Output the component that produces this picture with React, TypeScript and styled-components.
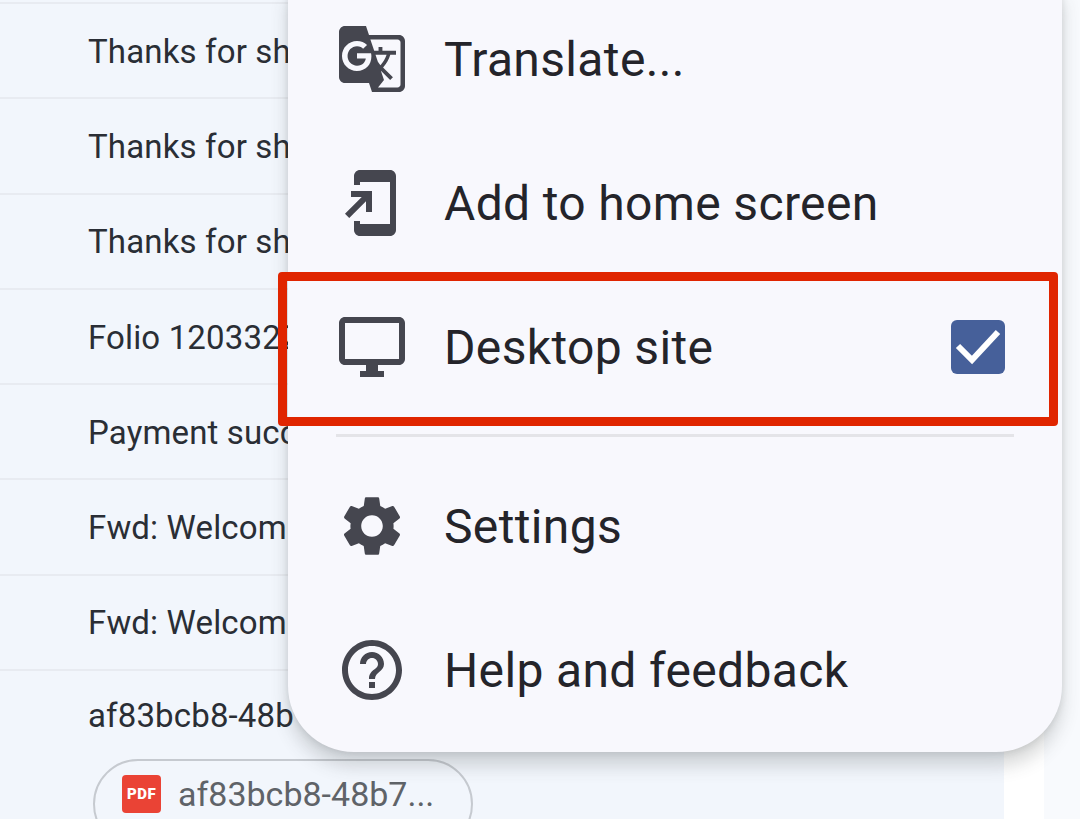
import React from "react";
import styled, { createGlobalStyle } from "styled-components";

const GlobalStyle = createGlobalStyle`
    html, body {
        margin: 0;
        padding: 0;
        background: #ffffff;
    }
    * {
        box-sizing: border-box;
    }
`;

const Screen = styled.div`
    position: relative;
    width: 1080px;
    height: 819px;
    overflow: hidden;
    background: linear-gradient(to right, #ffffff 1044px, #f8fafd 1044px);
    font-family: Roboto, "Noto Sans", sans-serif;
`;

const MailList = styled.div`
    width: 1004px;
    height: 819px;
    padding-top: 2px;
    background: #f2f6fc;
`;

const MailRow = styled.div`
    height: 95.3px;
    padding: 1px 0 0 88px;
    display: flex;
    align-items: center;
    border-top: 2px solid #e8ebf1;
    font-size: 33px;
    letter-spacing: 0.15px;
    color: #2a2e35;
    white-space: nowrap;
`;

const LastRow = styled(MailRow)`
    height: 90px;
`;

const AttachmentChip = styled.div`
    width: 380px;
    height: 90px;
    margin-left: 93px;
    padding: 14px 0 0 27px;
    display: flex;
    align-items: flex-start;
    gap: 17px;
    border: 2px solid #c6cad0;
    border-radius: 45px;
`;

const PdfBadge = styled.span`
    width: 39px;
    height: 38px;
    display: flex;
    align-items: center;
    justify-content: center;
    border-radius: 4px;
    background: #ea4335;
    color: #ffffff;
    font-size: 15px;
    font-weight: 900;
    letter-spacing: 0.5px;
`;

const ChipName = styled.span`
    font-size: 34px;
    line-height: 38px;
    color: #5f6368;
    white-space: nowrap;
`;

const Menu = styled.div`
    position: absolute;
    top: -13px;
    left: 288px;
    width: 774px;
    height: 765px;
    border-radius: 0 0 66px 66px;
    background: #f8f8fd;
    box-shadow: 0 14px 18px rgba(60, 64, 67, 0.2), 0 2px 6px rgba(60, 64, 67, 0.12);
`;

const MenuRow = styled.div<{ $selected?: boolean }>`
    position: relative;
    height: 144px;
    padding: 0 57px 0 48px;
    display: flex;
    align-items: center;
    gap: 36px;

    ${({ $selected }) =>
        $selected &&
        `
        &::after {
            content: "";
            position: absolute;
            top: -3px;
            left: -10px;
            right: 4px;
            bottom: -7px;
            border: 9px solid #e02500;
            border-radius: 4px;
        }
    `}
`;

const MenuIcon = styled.svg`
    width: 72px;
    height: 72px;
    flex: none;
    fill: #45464f;
`;

const MenuLabel = styled.span`
    flex: 1;
    font-size: 48px;
    letter-spacing: 0.35px;
    color: #24242a;
    white-space: nowrap;
`;

const CheckBox = styled.span`
    width: 54px;
    height: 54px;
    flex: none;
    display: flex;
    border-radius: 6px;
    background: #46609a;

    svg {
        width: 54px;
        height: 54px;
        fill: none;
        stroke: #ffffff;
        stroke-width: 6;
    }
`;

const MenuDivider = styled.div`
    height: 3px;
    margin: 15px 48px 17px;
    background: #e4e4e8;
`;

const ICONS = {
    translate:
        "M21 4H11l-1-3H3c-1.1 0-2 .9-2 2v15c0 1.1.9 2 2 2h8l1 3h9c1.1 0 2-.9 2-2V6c0-1.1-.9-2-2-2zM7 16c-2.76 0-5-2.24-5-5s2.24-5 5-5c1.35 0 2.48.5 3.35 1.3L9.03 8.57c-.38-.36-1.04-.78-2.03-.78-1.74 0-3.15 1.44-3.15 3.21S5.26 14.21 7 14.21c2.01 0 2.84-1.44 2.92-2.41H7v-1.71h4.68c.07.31.12.61.12 1.02C11.8 13.97 9.89 16 7 16zm6.17-5.42h3.7c-.43 1.25-1.11 2.43-2.05 3.47-.31-.35-.6-.72-.86-1.1l-.79-2.37zm8.33 9.92c0 .55-.45 1-1 1H14l2-2.5-1.04-3.1 3.1 3.1.92-.92-3.3-3.25.02-.02c1.13-1.25 1.93-2.69 2.4-4.22H20v-1.3h-4.53V8h-1.29v1.29h-1.44L11.46 5.5h9.04c.55 0 1 .45 1 1v14z",
    addHome:
        "M18 1.01 8 1c-1.1 0-2 .9-2 2v3h2V5h10v14H8v-1H6v3c0 1.1.9 2 2 2h10c1.1 0 2-.9 2-2V3c0-1.1-.9-1.99-2-1.99zM10 15h2V8H5v2h3.59L3 15.59 4.41 17 10 11.41z",
    desktop:
        "M21 2H3c-1.1 0-2 .9-2 2v12c0 1.1.9 2 2 2h7v2H8v2h8v-2h-2v-2h7c1.1 0 2-.9 2-2V4c0-1.1-.9-2-2-2zm0 14H3V4h18v12z",
    settings:
        "M19.14 12.94c.04-.3.06-.61.06-.94 0-.32-.02-.64-.07-.94l2.03-1.58c.18-.14.23-.41.12-.61l-1.92-3.32c-.12-.22-.37-.29-.59-.22l-2.39.96c-.5-.38-1.03-.7-1.62-.94l-.36-2.54c-.04-.24-.24-.41-.48-.41h-3.84c-.24 0-.43.17-.47.41l-.36 2.54c-.59.24-1.13.57-1.62.94l-2.39-.96c-.22-.08-.47 0-.59.22L2.74 8.87c-.12.21-.08.47.12.61l2.03 1.58c-.05.3-.09.63-.09.94s.02.64.07.94l-2.03 1.58c-.18.14-.23.41-.12.61l1.92 3.32c.12.22.37.29.59.22l2.39-.96c.5.38 1.03.7 1.62.94l.36 2.54c.05.24.24.41.48.41h3.84c.24 0 .44-.17.47-.41l.36-2.54c.59-.24 1.13-.56 1.62-.94l2.39.96c.22.08.47 0 .59-.22l1.92-3.32c.12-.22.07-.47-.12-.61l-2.01-1.58zM12 15.6c-1.98 0-3.6-1.62-3.6-3.6s1.62-3.6 3.6-3.6 3.6 1.62 3.6 3.6-1.62 3.6-3.6 3.6z",
    help:
        "M11 18h2v-2h-2v2zm1-16C6.48 2 2 6.48 2 12s4.48 10 10 10 10-4.48 10-10S17.52 2 12 2zm0 18c-4.41 0-8-3.59-8-8s3.59-8 8-8 8 3.59 8 8-3.59 8-8 8zm0-14c-2.21 0-4 1.79-4 4h2c0-1.1.9-2 2-2s2 .9 2 2c0 2-3 1.75-3 5h2c0-2.25 3-2.5 3-5 0-2.21-1.79-4-4-4z",
};

const SUBJECTS = [
    "Thanks for sh",
    "Thanks for sh",
    "Thanks for sh",
    "Folio 1203322",
    "Payment succ",
    "Fwd: Welcom",
    "Fwd: Welcom",
];

const Item = ({ icon, label, selected, children }: {
    icon: keyof typeof ICONS;
    label: string;
    selected?: boolean;
    children?: React.ReactNode;
}) => (
    <MenuRow $selected={selected}>
        <MenuIcon viewBox="0 0 24 24">
            <path d={ICONS[icon]} />
        </MenuIcon>
        <MenuLabel>{label}</MenuLabel>
        {children}
    </MenuRow>
);

export default function App() {
    return (
        <Screen>
            <GlobalStyle />
            <MailList>
                {SUBJECTS.map((subject, i) => (
                    <MailRow key={i}>{subject}</MailRow>
                ))}
                <LastRow>af83bcb8-48b</LastRow>
                <AttachmentChip>
                    <PdfBadge>PDF</PdfBadge>
                    <ChipName>af83bcb8-48b7...</ChipName>
                </AttachmentChip>
            </MailList>
            <Menu>
                <Item icon="translate" label="Translate..." />
                <Item icon="addHome" label="Add to home screen" />
                <Item icon="desktop" label="Desktop site" selected>
                    <CheckBox>
                        <svg viewBox="0 0 54 54">
                            <path d="M7 26l14 14 26-28" />
                        </svg>
                    </CheckBox>
                </Item>
                <MenuDivider />
                <Item icon="settings" label="Settings" />
                <Item icon="help" label="Help and feedback" />
            </Menu>
        </Screen>
    );
}
